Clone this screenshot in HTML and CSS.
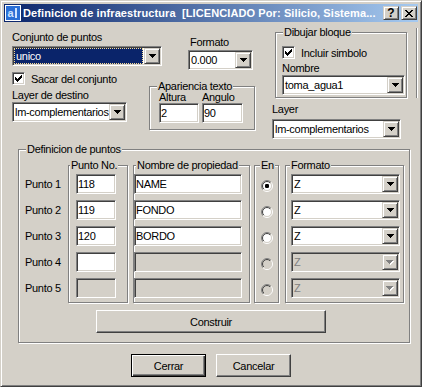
FILE: index.html
```html
<!DOCTYPE html>
<html lang="es">
<head>
    <meta charset="UTF-8">
    <meta name="viewport" content="width=device-width, initial-scale=1.0">
    <title>Definicion de infraestructura</title>
    <link rel="stylesheet" href="styles.css">
</head>
<body>
    <svg class="svg-defs" width="0" height="0" aria-hidden="true">
        <defs>
            <linearGradient id="radio-outer" x1="0" y1="0" x2="1" y2="1">
                <stop offset="0.5" stop-color="#808080"/>
                <stop offset="0.5" stop-color="#ffffff"/>
            </linearGradient>
            <linearGradient id="radio-inner" x1="0" y1="0" x2="1" y2="1">
                <stop offset="0.5" stop-color="#404040"/>
                <stop offset="0.5" stop-color="#d4d0c8"/>
            </linearGradient>
        </defs>
    </svg>

    <div class="window">
        <div class="titlebar">
            <svg class="app-icon" width="16" height="16" viewBox="0 0 16 16">
                <rect x="0.5" y="0.5" width="15" height="15" fill="#2b6fd6" stroke="#ffffff"/>
                <text x="2.5" y="12" font-family="Liberation Sans" font-size="11" font-weight="bold" fill="#cfe3ff">a</text>
                <rect x="10" y="3" width="2" height="10" fill="#cfe3ff"/>
            </svg>
            <span class="title">Definicion de infraestructura&nbsp; [LICENCIADO Por: Silicio, Sistema...</span>
            <div class="caption-buttons">
                <span class="caption-btn">?</span>
                <span class="caption-btn">
                    <svg width="8" height="7" viewBox="0 0 8 7"><path d="M0 0h2v1H0zM6 0h2v1H6zM1 1h2v1H1zM5 1h2v1H5zM2 2h4v1H2zM3 3h2v1H3zM2 4h4v1H2zM1 5h2v1H1zM5 5h2v1H5zM0 6h2v1H0zM6 6h2v1H6z" fill="#000"/></svg>
                </span>
            </div>
        </div>

        <div class="client">
            <div class="top">
                <!-- left column -->
                <div class="col-a">
                    <label class="lbl">Conjunto de puntos</label>
                    <div class="combo combo-conjunto">
                        <span class="combo-value"><span class="selected">unico</span></span>
                        <span class="combo-btn"><svg width="7" height="4" viewBox="0 0 7 4"><path d="M0 0h7v1H0zM1 1h5v1H1zM2 2h3v1H2zM3 3h1v1H3z" fill="#000"/></svg></span>
                    </div>
                    <div class="check-row">
                        <span class="checkbox"><svg width="7" height="7" viewBox="0 0 7 7"><path d="M0 2h1v3H0zM1 3h1v3H1zM2 4h1v3H2zM3 3h1v3H3zM4 2h1v3H4zM5 1h1v3H5zM6 0h1v3H6z" fill="#000"/></svg></span>
                        Sacar del conjunto
                    </div>
                    <label class="lbl lbl-destino">Layer de destino</label>
                    <div class="combo combo-destino">
                        <span class="combo-value">lm-complementarios</span>
                        <span class="combo-btn"><svg width="7" height="4" viewBox="0 0 7 4"><path d="M0 0h7v1H0zM1 1h5v1H1zM2 2h3v1H2zM3 3h1v1H3z" fill="#000"/></svg></span>
                    </div>
                </div>

                <!-- middle column -->
                <div class="col-b">
                    <label class="lbl lbl-formato">Formato</label>
                    <div class="combo combo-formato">
                        <span class="combo-value">0.000</span>
                        <span class="combo-btn"><svg width="7" height="4" viewBox="0 0 7 4"><path d="M0 0h7v1H0zM1 1h5v1H1zM2 2h3v1H2zM3 3h1v1H3z" fill="#000"/></svg></span>
                    </div>
                    <fieldset class="group apariencia">
                        <legend>Apariencia texto</legend>
                        <div class="pair">
                            <label class="pair-lbl">Altura</label>
                            <label class="pair-lbl">Angulo</label>
                            <input class="edit" type="text" value="2">
                            <input class="edit" type="text" value="90">
                        </div>
                    </fieldset>
                </div>

                <!-- right column -->
                <div class="col-c">
                    <fieldset class="group bloque">
                        <legend>Dibujar bloque</legend>
                        <div class="check-row check-bloque">
                            <span class="checkbox"><svg width="7" height="7" viewBox="0 0 7 7"><path d="M0 2h1v3H0zM1 3h1v3H1zM2 4h1v3H2zM3 3h1v3H3zM4 2h1v3H4zM5 1h1v3H5zM6 0h1v3H6z" fill="#000"/></svg></span>
                            Incluir simbolo
                        </div>
                        <label class="lbl lbl-nombre">Nombre</label>
                        <div class="combo combo-nombre">
                            <span class="combo-value">toma_agua1</span>
                            <span class="combo-btn"><svg width="7" height="4" viewBox="0 0 7 4"><path d="M0 0h7v1H0zM1 1h5v1H1zM2 2h3v1H2zM3 3h1v1H3z" fill="#000"/></svg></span>
                        </div>
                    </fieldset>
                    <label class="lbl lbl-layer">Layer</label>
                    <div class="combo combo-layer">
                        <span class="combo-value">lm-complementarios</span>
                        <span class="combo-btn"><svg width="7" height="4" viewBox="0 0 7 4"><path d="M0 0h7v1H0zM1 1h5v1H1zM2 2h3v1H2zM3 3h1v1H3z" fill="#000"/></svg></span>
                    </div>
                </div>
                <div class="etch-v"></div>
            </div>

            <fieldset class="group puntos">
                <legend>Definicion de puntos</legend>
                <div class="puntos-grid">
                    <div class="row-labels">
                        <span>Punto 1</span>
                        <span>Punto 2</span>
                        <span>Punto 3</span>
                        <span>Punto 4</span>
                        <span>Punto 5</span>
                    </div>

                    <fieldset class="group sub sub-no">
                        <legend>Punto No.</legend>
                        <div class="cells">
                            <input class="edit" type="text" value="118">
                            <input class="edit" type="text" value="119">
                            <input class="edit" type="text" value="120">
                            <input class="edit" type="text" value="">
                            <input class="edit" type="text" value="" disabled>
                        </div>
                    </fieldset>

                    <fieldset class="group sub sub-prop">
                        <legend>Nombre de propiedad</legend>
                        <div class="cells">
                            <input class="edit" type="text" value="NAME">
                            <input class="edit" type="text" value="FONDO">
                            <input class="edit" type="text" value="BORDO">
                            <input class="edit" type="text" value="" disabled>
                            <input class="edit" type="text" value="" disabled>
                        </div>
                    </fieldset>

                    <fieldset class="group sub sub-en">
                        <legend>En</legend>
                        <div class="cells radios">
                            <span class="radio-cell"><svg width="12" height="12" viewBox="0 0 12 12"><circle cx="6" cy="6" r="5.5" fill="none" stroke="url(#radio-outer)"/><circle cx="6" cy="6" r="4.5" fill="#fff" stroke="url(#radio-inner)"/><rect x="4" y="4" width="4" height="4" rx="1.2" fill="#000"/></svg></span>
                            <span class="radio-cell"><svg width="12" height="12" viewBox="0 0 12 12"><circle cx="6" cy="6" r="5.5" fill="none" stroke="url(#radio-outer)"/><circle cx="6" cy="6" r="4.5" fill="#fff" stroke="url(#radio-inner)"/></svg></span>
                            <span class="radio-cell"><svg width="12" height="12" viewBox="0 0 12 12"><circle cx="6" cy="6" r="5.5" fill="none" stroke="url(#radio-outer)"/><circle cx="6" cy="6" r="4.5" fill="#fff" stroke="url(#radio-inner)"/></svg></span>
                            <span class="radio-cell"><svg width="12" height="12" viewBox="0 0 12 12"><circle cx="6" cy="6" r="5.5" fill="none" stroke="url(#radio-outer)"/><circle cx="6" cy="6" r="4.5" fill="#d4d0c8" stroke="url(#radio-inner)"/></svg></span>
                            <span class="radio-cell"><svg width="12" height="12" viewBox="0 0 12 12"><circle cx="6" cy="6" r="5.5" fill="none" stroke="url(#radio-outer)"/><circle cx="6" cy="6" r="4.5" fill="#d4d0c8" stroke="url(#radio-inner)"/></svg></span>
                        </div>
                    </fieldset>

                    <fieldset class="group sub sub-fmt">
                        <legend>Formato</legend>
                        <div class="cells">
                            <div class="combo">
                                <span class="combo-value">Z</span>
                                <span class="combo-btn"><svg width="7" height="4" viewBox="0 0 7 4"><path d="M0 0h7v1H0zM1 1h5v1H1zM2 2h3v1H2zM3 3h1v1H3z" fill="#000"/></svg></span>
                            </div>
                            <div class="combo">
                                <span class="combo-value">Z</span>
                                <span class="combo-btn"><svg width="7" height="4" viewBox="0 0 7 4"><path d="M0 0h7v1H0zM1 1h5v1H1zM2 2h3v1H2zM3 3h1v1H3z" fill="#000"/></svg></span>
                            </div>
                            <div class="combo">
                                <span class="combo-value">Z</span>
                                <span class="combo-btn"><svg width="7" height="4" viewBox="0 0 7 4"><path d="M0 0h7v1H0zM1 1h5v1H1zM2 2h3v1H2zM3 3h1v1H3z" fill="#000"/></svg></span>
                            </div>
                            <div class="combo disabled">
                                <span class="combo-value">Z</span>
                                <span class="combo-btn"><svg width="8" height="5" viewBox="0 0 8 5"><path d="M1 1h7v1H1zM2 2h5v1H2zM3 3h3v1H3zM4 4h1v1H4z" fill="#fff"/><path d="M0 0h7v1H0zM1 1h5v1H1zM2 2h3v1H2zM3 3h1v1H3z" fill="#808080"/></svg></span>
                            </div>
                            <div class="combo disabled">
                                <span class="combo-value">Z</span>
                                <span class="combo-btn"><svg width="8" height="5" viewBox="0 0 8 5"><path d="M1 1h7v1H1zM2 2h5v1H2zM3 3h3v1H3zM4 4h1v1H4z" fill="#fff"/><path d="M0 0h7v1H0zM1 1h5v1H1zM2 2h3v1H2zM3 3h1v1H3z" fill="#808080"/></svg></span>
                            </div>
                        </div>
                    </fieldset>
                </div>

                <button class="btn construir" type="button">Construir</button>
            </fieldset>

            <div class="actions">
                <button class="btn btn-default" type="button">Cerrar</button>
                <button class="btn" type="button">Cancelar</button>
            </div>
        </div>
    </div>
</body>
</html>
```

FILE: styles.css
```css
* {
    margin: 0;
    padding: 0;
    box-sizing: border-box;
}

body {
    font-family: 'Liberation Sans', Arial, sans-serif;
    font-size: 11px;
    letter-spacing: -0.3px;
    color: #000;
    background: #d4d0c8;
}

.svg-defs {
    position: absolute;
}

/* window frame */
.window {
    width: 422px;
    height: 387px;
    background: #d4d0c8;
    border: 1px solid;
    border-color: #d4d0c8 #404040 #404040 #d4d0c8;
    box-shadow: inset 1px 1px 0 #fff, inset -1px -1px 0 #808080;
    padding: 3px;
}

.titlebar {
    height: 18px;
    display: flex;
    align-items: center;
    background: linear-gradient(to right, #0a246a, #a6caf0);
    color: #fff;
    font-weight: bold;
    letter-spacing: 0.1px;
}

.app-icon {
    flex: none;
    margin-left: 1px;
}

.title {
    flex: 1;
    margin-left: 2px;
    white-space: pre;
    overflow: hidden;
}

.caption-buttons {
    display: flex;
    gap: 2px;
    margin-right: 1px;
}

.caption-btn {
    width: 16px;
    height: 14px;
    display: flex;
    align-items: center;
    justify-content: center;
    background: #d4d0c8;
    border: 1px solid;
    border-color: #d4d0c8 #404040 #404040 #d4d0c8;
    box-shadow: inset 1px 1px 0 #fff, inset -1px -1px 0 #808080;
    color: #000;
    font-size: 12px;
    line-height: 12px;
}

/* dialog body */
.client {
    padding: 4px 0 0 8px;
}

.lbl {
    display: block;
    line-height: 13px;
}

.top {
    display: flex;
    align-items: flex-start;
}

.col-a {
    width: 137px;
    padding-top: 5px;
}

.col-a .combo-conjunto {
    margin-top: 2px;
    width: 150px;
}

.check-row {
    display: flex;
    align-items: center;
    gap: 6px;
    height: 15px;
    margin-top: 5px;
}

.lbl-destino {
    margin-top: 3px;
}

.combo-destino {
    width: 115px;
}

.col-b {
    width: 105px;
    padding-top: 10px;
}

.lbl-formato {
    margin-left: 41px;
    margin-bottom: 1px;
}

.combo-formato {
    margin-left: 39px;
    width: 65px;
}

.col-c {
    width: 135px;
    margin-left: 18px;
}

.etch-v {
    width: 2px;
    height: 70px;
    margin: 2px 0 0 9px;
    border-left: 1px solid #808080;
    border-right: 1px solid #fff;
}

/* group boxes */
.group {
    min-width: 0;
    border: 1px solid #808080;
    box-shadow: inset 1px 1px 0 #fff, 1px 1px 0 #fff;
}

.group legend {
    padding: 0 1px;
    line-height: 13px;
    background: #d4d0c8;
}

.apariencia {
    width: 106px;
    margin-top: 10px;
    padding: 0 0 6px 9px;
}

.apariencia legend {
    margin-left: -2px;
}

.pair {
    display: grid;
    grid-template-columns: 40px 41px;
    column-gap: 3px;
    margin-top: -1px;
}

.pair-lbl {
    line-height: 11px;
}

.bloque {
    width: 132px;
    margin-left: 3px;
    padding: 0 1px 2px 6px;
}

.bloque legend {
    margin-left: 1px;
}

.check-bloque {
    margin-top: 6px;
}

.lbl-nombre {
    margin-top: 2px;
}

.combo-nombre {
    width: 123px;
}

.lbl-layer {
    margin-top: 5px;
    margin-bottom: 3px;
}

.combo-layer {
    width: 129px;
}

/* sunken controls */
.edit,
.combo,
.checkbox {
    background: #fff;
    border: 1px solid;
    border-color: #808080 #fff #fff #808080;
    box-shadow: inset 1px 1px 0 #404040, inset -1px -1px 0 #d4d0c8;
}

.edit {
    display: block;
    height: 20px;
    width: 100%;
    padding: 0 0 0 1px;
    font: inherit;
    letter-spacing: inherit;
    color: #000;
    outline: none;
}

.edit:disabled {
    background: #d4d0c8;
}

.checkbox {
    width: 13px;
    height: 13px;
    flex: none;
    padding: 2px;
    display: flex;
}

.combo {
    height: 20px;
    display: flex;
    padding: 1px;
}

.combo-value {
    flex: 1;
    display: flex;
    align-items: center;
    padding-left: 1px;
    overflow: hidden;
    white-space: nowrap;
}

.combo-btn {
    width: 16px;
    height: 16px;
    flex: none;
    display: flex;
    align-items: center;
    justify-content: center;
    background: #d4d0c8;
    border: 1px solid;
    border-color: #d4d0c8 #404040 #404040 #d4d0c8;
    box-shadow: inset 1px 1px 0 #fff, inset -1px -1px 0 #808080;
}

.combo.disabled {
    background: #d4d0c8;
    color: #808080;
}

.combo-conjunto .combo-value {
    padding: 0 1px 0 0;
}

.selected {
    flex: 1;
    height: 100%;
    display: flex;
    align-items: center;
    padding-left: 1px;
    background: #0a246a;
    color: #fff;
    border: 1px dotted #f5db95;
}

/* definicion de puntos */
.puntos {
    width: 392px;
    margin: 4px 0 0 6px;
    padding: 0 0 9px 6px;
}

.puntos legend {
    margin-left: 1px;
}

.puntos-grid {
    display: flex;
    align-items: flex-start;
}

.row-labels {
    width: 43px;
    padding-top: 18px;
    display: flex;
    flex-direction: column;
    gap: 6px;
}

.row-labels span {
    line-height: 20px;
}

.sub {
    margin-top: 3px;
    padding-bottom: 4px;
}

.cells {
    display: flex;
    flex-direction: column;
    gap: 6px;
    padding-top: 2px;
}

.sub-no {
    width: 60px;
    padding-left: 7px;
}

.sub-no .edit {
    width: 40px;
}

.sub-no legend {
    margin-left: -6px;
}

.sub-prop {
    width: 117px;
    margin-left: 5px;
}

.sub-prop .edit {
    width: 108px;
}

.sub-prop legend {
    margin-left: 2px;
}

.sub-en {
    width: 25px;
    margin-left: 4px;
    padding-left: 6px;
}

.sub-en legend {
    margin-left: -1px;
}

.radio-cell {
    height: 20px;
    display: flex;
    align-items: center;
    padding-top: 3px;
}

.sub-fmt {
    width: 119px;
    margin-left: 6px;
    padding-left: 5px;
}

.sub-fmt legend {
    margin-left: -1px;
}

.sub-fmt .combo {
    width: 109px;
}

/* push buttons */
.btn {
    display: block;
    height: 23px;
    width: 75px;
    font: inherit;
    letter-spacing: inherit;
    color: #000;
    background: #d4d0c8;
    border: 1px solid;
    border-color: #fff #404040 #404040 #fff;
    box-shadow: inset -1px -1px 0 #808080;
}

.btn-default {
    border-color: #000;
    box-shadow: inset 1px 1px 0 #fff, inset -1px -1px 0 #404040, inset -2px -2px 0 #808080;
}

.construir {
    width: 230px;
    margin: 7px 0 0 71px;
}

.actions {
    display: flex;
    justify-content: center;
    gap: 10px;
    margin: 11px 0 0 -8px;
}
```
